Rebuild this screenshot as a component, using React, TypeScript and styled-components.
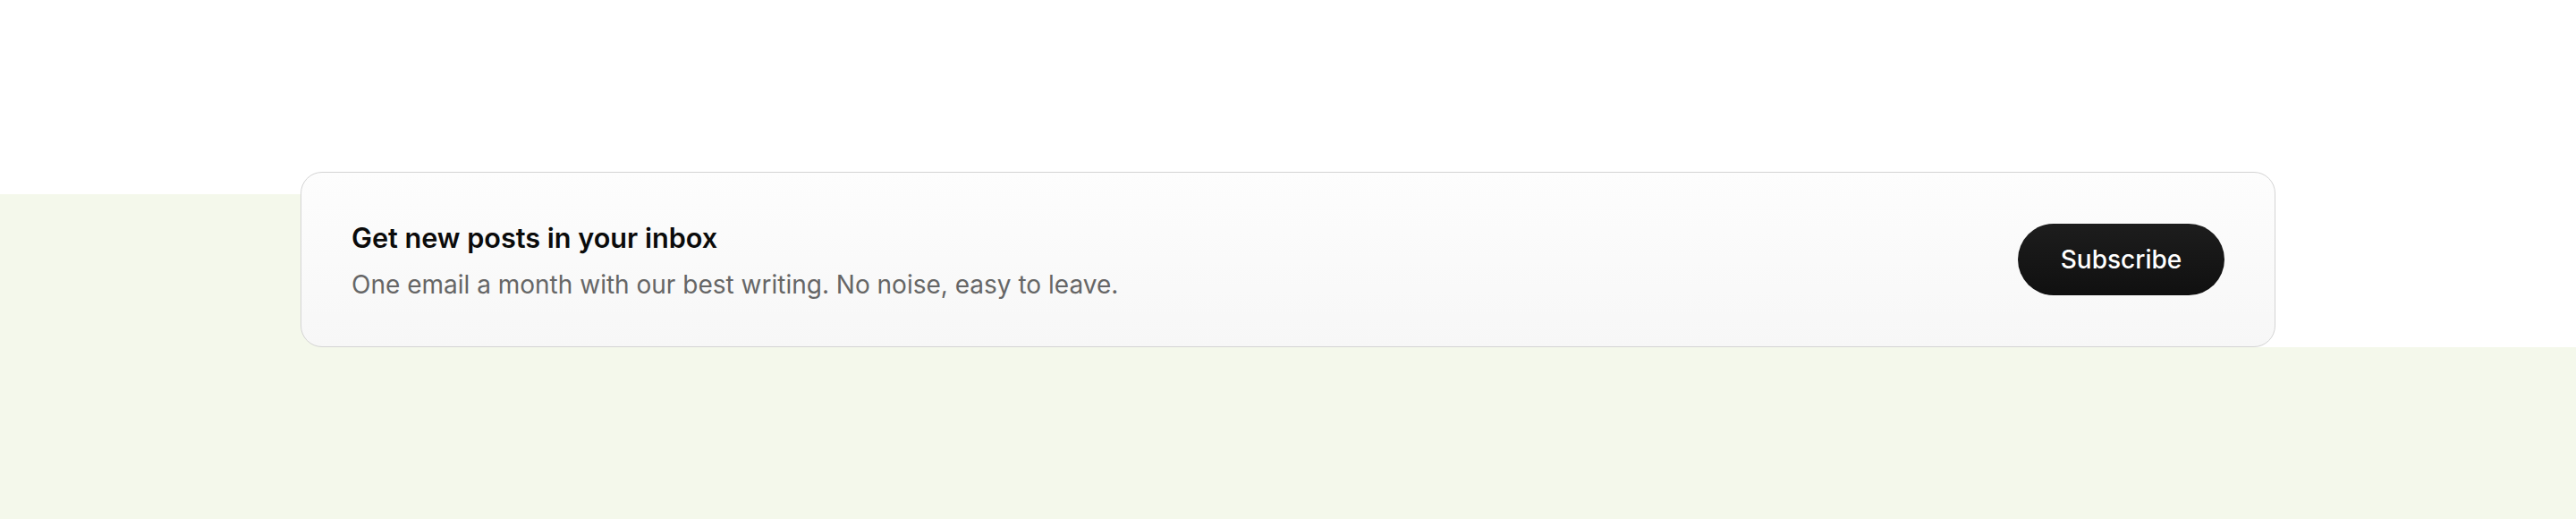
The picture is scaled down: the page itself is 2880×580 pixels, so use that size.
import React from "react";
import styled, { createGlobalStyle } from "styled-components";

const GlobalStyle = createGlobalStyle`
  html, body {
    margin: 0;
    padding: 0;
    background: #ffffff;
    font-family: Inter, "Noto Sans", "Liberation Sans", sans-serif;
    -webkit-font-smoothing: antialiased;
  }
`;

const Page = styled.div`
  display: flex;
  flex-direction: column;
  min-height: 580px;
  background: #ffffff;
`;

const Hero = styled.section`
  height: 217px;
  background: #ffffff;
`;

const Band = styled.section`
  flex: 1;
  background: #f4f8eb;
`;

const Shelf = styled.div`
  display: flex;
  justify-content: center;
  margin-top: -25px;
  padding: 0 336px;
  background: linear-gradient(to right, transparent 50%, #ffffff 50%);
`;

const Card = styled.div`
  flex: 1;
  max-width: 2208px;
  box-sizing: border-box;
  display: flex;
  align-items: center;
  justify-content: space-between;
  gap: 48px;
  padding: 54px 56px 52px;
  border: 1px solid #d4d4d4;
  border-radius: 24px;
  background: linear-gradient(to bottom, #fdfdfd 0%, #f7f7f7 100%);
`;

const Copy = styled.div`
  display: flex;
  flex-direction: column;
  gap: 16px;
`;

const Title = styled.h2`
  margin: 0;
  font-size: 30.6px;
  line-height: 38px;
  font-weight: 600;
  color: #0b0b0b;
`;

const Subtitle = styled.p`
  margin: 0;
  font-size: 28px;
  line-height: 34px;
  font-weight: 400;
  color: #666666;
`;

const Button = styled.button`
  flex-shrink: 0;
  align-self: center;
  margin-top: -2px;
  height: 80px;
  width: 231px;
  border: none;
  border-radius: 40px;
  background: linear-gradient(to bottom, #1d1d1d 0%, #101010 100%);
  color: #ffffff;
  font-family: inherit;
  font-size: 28px;
  font-weight: 500;
  cursor: pointer;
`;

export default function App() {
  return (
    <>
      <GlobalStyle />
      <Page>
        <Hero />
        <Band>
          <Shelf>
            <Card>
              <Copy>
                <Title>Get new posts in your inbox</Title>
                <Subtitle>One email a month with our best writing. No noise, easy to leave.</Subtitle>
              </Copy>
              <Button>Subscribe</Button>
            </Card>
          </Shelf>
        </Band>
      </Page>
    </>
  );
}
